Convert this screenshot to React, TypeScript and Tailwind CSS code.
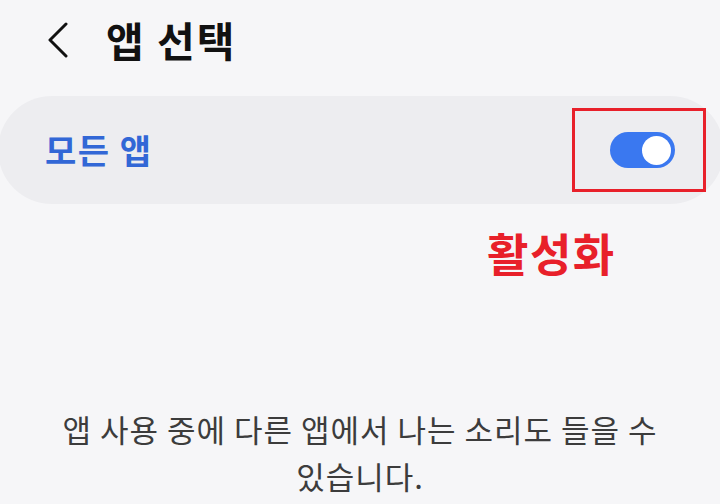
import React from "react";

export default function App() {
  return (
    <div
      className="w-[720px] h-[504px] bg-[#f6f6f8] overflow-hidden flex flex-col"
      style={{ fontFamily: '"Noto Sans CJK KR", "Noto Sans", sans-serif' }}
    >
      <div className="flex items-center h-[78px] pl-[46px]">
        <svg width="24" height="36" viewBox="0 0 24 36" className="mt-[1px]">
          <path d="M20 2 L4 18 L20 34" fill="none" stroke="#111" strokeWidth="3" strokeLinecap="round" strokeLinejoin="round" />
        </svg>
        <div className="ml-[36px] text-[41px] font-bold text-[#111] leading-none tracking-[2px]">앱 선택</div>
      </div>
      <div className="mt-[18px] ml-[-2px] w-[726px] h-[108px] rounded-full bg-[#ededf0] flex items-center pl-[47px]">
        <div className="text-[34px] font-bold text-[#3267d6] leading-none tracking-[1.5px]">모든 앱</div>
        <div className="ml-auto mr-[18px] w-[134px] h-[84px] border-[3px] border-[#e8202a] flex items-center pl-[35px]">
          <div className="w-[65px] h-[36px] rounded-full bg-[#3a78f0] flex items-center justify-end pr-[4px]">
            <div className="w-[29px] h-[29px] rounded-full bg-white" />
          </div>
        </div>
      </div>
      <div className="mt-[26px] pl-[487px] text-[45px] font-bold text-[#e8202a] leading-none tracking-[1.5px]">활성화</div>
      <div className="mt-[130px] text-center text-[31px] text-[#3c3c3c] leading-[47px] tracking-[1px]">
        앱 사용 중에 다른 앱에서 나는 소리도 들을 수<br />있습니다.
      </div>
    </div>
  );
}
